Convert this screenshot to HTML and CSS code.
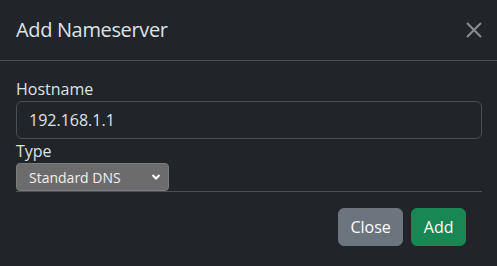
FILE: index.html
```html
<!DOCTYPE html>
<html>
<head>
<meta charset="utf-8">
<link rel="stylesheet" href="styles.css">
</head>
<body>
<div class="modal">
  <div class="modal-header">
    <h5 class="modal-title">Add Nameserver</h5>
    <button class="btn-close" aria-label="Close">
      <svg width="16" height="16" viewBox="0 0 16 16"><path d="M1 1L15 15M15 1L1 15" stroke="#8b8d90" stroke-width="2" fill="none"/></svg>
    </button>
  </div>
  <div class="modal-body">
    <label class="form-label">Hostname</label>
    <input class="form-control" type="text" value="192.168.1.1">
    <label class="form-label">Type</label>
    <div class="select">
      <span>Standard DNS</span>
      <svg width="10" height="8" viewBox="0 0 10 8"><path d="M1.5 2L5 5.5L8.5 2" stroke="#fff" stroke-width="2" fill="none"/></svg>
    </div>
    <div class="rule"></div>
  </div>
  <div class="modal-footer">
    <button class="btn btn-secondary">Close</button>
    <button class="btn btn-success">Add</button>
  </div>
</div>
</body>
</html>
```
FILE: styles.css
```css
html, body {
  margin: 0;
  padding: 0;
  background: #212529;
  height: 100%;
}
body {
  font-family: "Open Sans", "Noto Sans", sans-serif;
  color: #dee2e6;
}
.modal {
  display: flex;
  flex-direction: column;
}
.modal-header {
  display: flex;
  align-items: center;
  justify-content: space-between;
  padding: 14px 15px 14px 16px;
  height: 32px;
  border-bottom: 1px solid #495057;
}
.modal-title {
  margin: 0;
  font-size: 20px;
  font-weight: 400;
  line-height: 32px;
  letter-spacing: -0.35px;
  color: #dee2e6;
}
.btn-close {
  background: none;
  border: 0;
  padding: 0;
  width: 16px;
  height: 16px;
  display: flex;
}
.modal-body {
  padding: 16px 15px 0 16px;
  display: flex;
  flex-direction: column;
}
.form-label {
  font-size: 16px;
  line-height: 24px;
  color: #dee2e6;
}
.form-control {
  box-sizing: border-box;
  height: 38px;
  width: 100%;
  margin: 0;
  padding: 6px 12px;
  font: inherit;
  font-size: 16px;
  line-height: 24px;
  color: #dee2e6;
  background: #212529;
  border: 1px solid #495057;
  border-radius: 6px;
}
.select {
  box-sizing: border-box;
  width: 153px;
  height: 28px;
  display: flex;
  align-items: center;
  justify-content: space-between;
  padding: 0 7px 0 12px;
  background: #6c6c6c;
  border: 1px solid #7c7c7c;
  border-radius: 4px;
  font-size: 14px;
  color: #f0f0f0;
}
.rule {
  height: 1px;
  background: #495057;
}
.modal-footer {
  display: flex;
  justify-content: flex-end;
  gap: 8px;
  padding: 16px 31px 16px 16px;
}
.btn {
  font: inherit;
  font-size: 16px;
  line-height: 24px;
  padding: 6px 11.5px;
  border: 1px solid transparent;
  border-radius: 6px;
  color: #fff;
}
.btn-secondary {
  background: #6c757d;
  border-color: #6c757d;
}
.btn-success {
  background: #198754;
  border-color: #198754;
}
```
